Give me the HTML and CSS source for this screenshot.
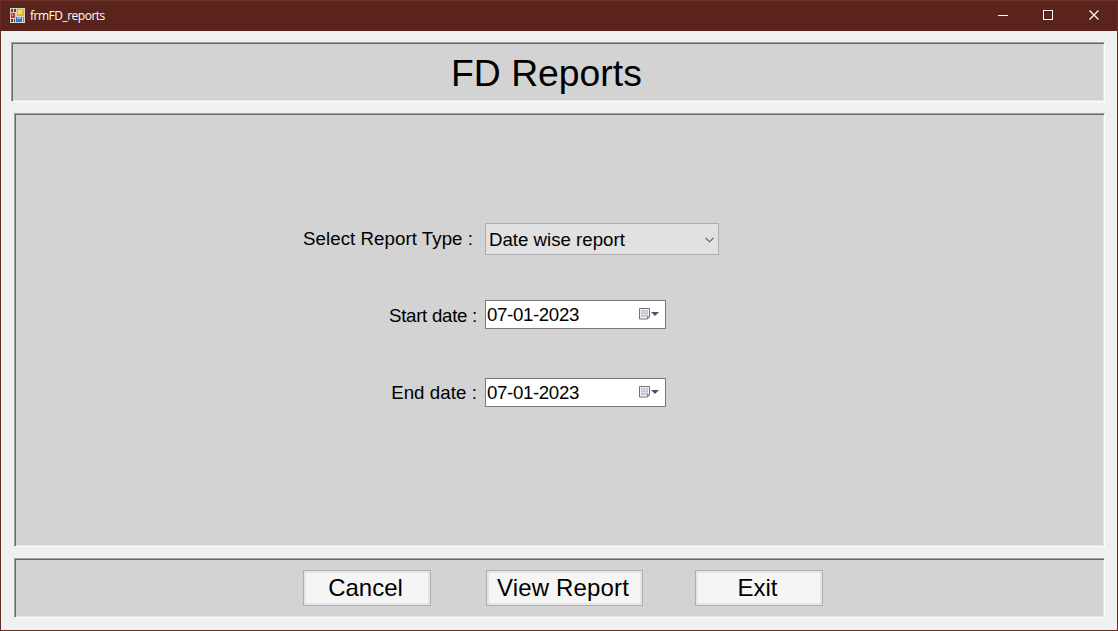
FILE: index.html
```html
<!DOCTYPE html>
<html lang="en">
<head>
<meta charset="utf-8">
<title>frmFD_reports</title>
<link rel="stylesheet" href="styles.css">
</head>
<body>
<div class="window">
  <header class="titlebar">
    <svg class="app-icon" width="15" height="15" viewBox="0 0 15 15">
      <rect width="15" height="15" fill="#d9d2c8"/>
      <path d="M1 1h2v3H1zM4 1h2v3H4zM1 11h2v3H1zM4 11h1v3H4z" fill="#59433b"/>
      <rect x="1" y="5" width="4" height="5" fill="#c8372c"/>
      <rect x="2" y="6" width="1" height="2" fill="#f2a79c"/>
      <rect x="7" y="1" width="7" height="7" fill="#e9b21e"/>
      <rect x="8" y="2" width="4" height="4" fill="#ffdf61"/>
      <rect x="6" y="9" width="6" height="5" fill="#3478cc"/>
      <rect x="7" y="9" width="4" height="2" fill="#7db8f2"/>
      <rect x="13" y="9" width="1" height="5" fill="#8d8580"/>
    </svg>
    <span class="caption">frmFD_reports</span>
    <div class="controls">
      <svg width="46" height="30" viewBox="0 0 46 30"><path d="M18 15.5h10" stroke="#fff"/></svg>
      <svg width="46" height="30" viewBox="0 0 46 30"><rect x="17.5" y="10.5" width="9" height="9" fill="none" stroke="#fff"/></svg>
      <svg width="46" height="30" viewBox="0 0 46 30"><path d="M17.5 10.5l9 9M26.5 10.5l-9 9" stroke="#fff" stroke-width="1.2"/></svg>
    </div>
  </header>
  <main class="client">
    <section class="panel heading"><h1>FD Reports</h1></section>
    <section class="panel form">
      <div class="row row-type">
        <label class="label-type">Select Report Type :</label>
        <div class="combo"><span>Date wise report</span>
          <svg width="9" height="6" viewBox="0 0 9 6"><path d="M.5.8l4 4 4-4" fill="none" stroke="#555" stroke-width="1.1"/></svg>
        </div>
      </div>
      <div class="row row-start">
        <label class="label-start">Start date :</label>
        <div class="date"><span>07-01-2023</span>
          <svg width="21" height="14" viewBox="0 0 21 14"><path d="M1.5 1.5h10v8.500l-2 2h-8z" fill="#f1f3f6" stroke="#77716f"/><path d="M3 3h7v7H3z" fill="#b8c0cc"/><path d="M3 5h7M3 7.500h7M5 3v7M7.500 3v7" stroke="#e9edf3" stroke-width=".6"/><path d="M9 12v-2.500h2.500z" fill="#77716f"/><path d="M13 5h8l-4 4z" fill="#47536b"/></svg>
        </div>
      </div>
      <div class="row row-end">
        <label class="label-end">End date :</label>
        <div class="date"><span>07-01-2023</span>
          <svg width="21" height="14" viewBox="0 0 21 14"><path d="M1.5 1.5h10v8.500l-2 2h-8z" fill="#f1f3f6" stroke="#77716f"/><path d="M3 3h7v7H3z" fill="#b8c0cc"/><path d="M3 5h7M3 7.500h7M5 3v7M7.500 3v7" stroke="#e9edf3" stroke-width=".6"/><path d="M9 12v-2.500h2.500z" fill="#77716f"/><path d="M13 5h8l-4 4z" fill="#47536b"/></svg>
        </div>
      </div>
    </section>
    <section class="panel actions">
      <button class="btn">Cancel</button>
      <button class="btn btn-view">View Report</button>
      <button class="btn btn-exit">Exit</button>
    </section>
  </main>
</div>
</body>
</html>
```
FILE: styles.css
```css
* { box-sizing: border-box; }
body { margin: 0; font-family: "Liberation Sans", Arial, sans-serif; color: #000; }
.window {
  width: 1118px; height: 631px; overflow: hidden;
  display: flex; flex-direction: column;
  background: #f0f0f0; border: 1px solid #5f3028; border-top-color: #6b342b;
}
.titlebar {
  height: 30px; flex: none; display: flex; align-items: center;
  padding-left: 9px; background: #5a241c; color: #fff;
}
.app-icon { margin-top: -1px; }
.caption {
  margin-left: 5px; font: 12px/16px "Open Sans", "Noto Sans", sans-serif;
  letter-spacing: -.5px; white-space: nowrap;
}
.controls { display: flex; margin-left: auto; margin-right: -1px; height: 30px; margin-top: -2px; }
.client { display: flex; flex-direction: column; padding: 11px 12px 0 13px; }
.panel {
  border: 1px solid; border-color: #a0a0a0 #fff #fff #a0a0a0;
  box-shadow: inset 1px 1px #696969, inset -1px -1px #e3e3e3;
  background: #d3d3d3;
}
.heading { height: 60px; margin-left: -3px; padding: 9px 0 0 439px; }
h1 { margin: 0; font-size: 37.33px; line-height: 43px; font-weight: 400; white-space: nowrap; }
.form { height: 434px; margin-top: 11px; padding-top: 109px; font-size: 18.67px; line-height: 22px; }
.row { display: flex; white-space: nowrap; }
label { width: 462px; margin-right: 8px; padding-top: 4px; text-align: right; }
.label-type { width: 458px; margin-right: 12px; padding-top: 5px; letter-spacing: .06px; }
.label-start { padding-top: 5px; letter-spacing: -.27px; }
.label-end { letter-spacing: .08px; }
.combo {
  width: 234px; height: 32px; padding: 0 4px 0 3px;
  display: flex; align-items: center; justify-content: space-between;
  background: #e1e1e1; border: 1px solid #adadad;
}
.combo span { padding-top: 2px; }
.combo svg { margin-top: 1px; }
.date {
  width: 181px; height: 29px; padding: 0 6px 0 1px;
  display: flex; align-items: center; justify-content: space-between;
  background: #fff; border: 1px solid #7a7a7a;
}
.date span { letter-spacing: -.35px; }
.date svg { margin-top: -1px; }
.row-start { margin-top: 45px; }
.row-end { margin-top: 49px; }
.actions { display: flex; height: 60px; margin-top: 11px; padding: 11px 0 0 288px; }
.btn {
  width: 128px; height: 36px; padding: 0 3px 0 0; font: 24px/28px "Liberation Sans", Arial, sans-serif;
  color: #000; background: #f5f5f5; border: 1px solid #adadad; border-radius: 0;
  box-shadow: inset 0 0 0 2px #e5e5e5;
}
.btn-view { width: 157px; margin-left: 55px; letter-spacing: .15px; }
.btn-exit { margin-left: 52px; }
```
